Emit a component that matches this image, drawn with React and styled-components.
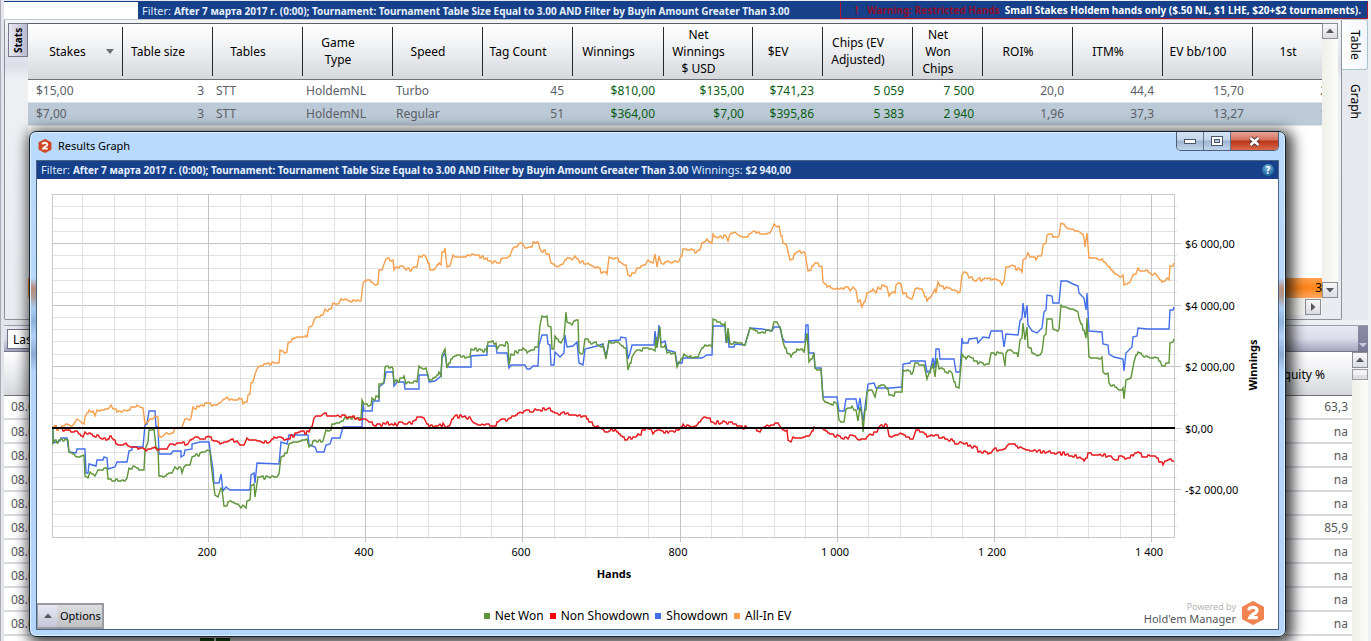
import React from 'react';
import styled, { createGlobalStyle, css } from "styled-components";

const GlobalStyle = createGlobalStyle`
* {
box-sizing: border-box;
}
body {
margin: 0;
overflow: hidden;
background: #eceef3;
font-family: "Noto Sans", "Open Sans", sans-serif;
font-size: 12px;
color: #000000;
}
button, select {
font-family: inherit;
color: inherit;
padding: 0;
margin: 0;
}
`

const Page = styled.div`
position: relative;
display: flex;
flex-direction: column;
min-height: 100vh;
padding: 1px 3px 0 4px;
box-shadow: inset 1px 0 0 #a9abb5;
background: linear-gradient(to right, #e4e5ec, #eef0f4);
`

const TopBar = styled.div`
display: flex;
height: 18px;
border-top: 1px solid #16408a;
background-color: #16408a;
color: #dbe9ff;
font-size: 11px;
line-height: 17px;
white-space: nowrap;
`

const TopBlank = styled.div`
flex: none;
width: 134px;
background-color: #ffffff;
`

const FilterText = styled.div`
flex: 1;
padding-left: 4px;
font-size: 11px;
line-height: 17px;
b {
font-size: 10px;
font-weight: 700;
color: #e6f0ff;
}
`

const Warning = styled.div`
display: flex;
align-items: center;
gap: 5px;
padding: 0 6px 0 14px;
border: 1px solid #b3142c;
border-top: 0;
font-weight: 700;
font-size: 10px;
color: #ffffff;
`

const WarningMark = styled.span`
color: #b00c20;
`

const WarningTitle = styled.span`
padding-left: 4px;
color: #8e0f2c;
`

const UpperPanel = styled.section`
display: flex;
height: 301px;
margin-bottom: 5px;
`

const PanelBody = styled.div`
display: flex;
flex: 1;
min-width: 0;
padding: 3px 3px 4px 3px;
border: 1px solid #8f9199;
border-top-color: #c4c6cc;
border-radius: 2px;
background: linear-gradient(#f4f5f8, #dcdfe8 45px, #eef0f4 60px, #e9ebf0);
`

const StatsTab = styled.button`
flex: none;
width: 20px;
height: 34px;
border: 1px solid #77788a;
background: linear-gradient(to left, #e8e8f2, #b9b9d0);
font-size: 10px;
font-weight: 700;
writing-mode: vertical-rl;
transform: rotate(180deg);
line-height: 16px;
`

const GridArea = styled.div`
display: flex;
flex-direction: column;
flex: 1;
min-width: 0;
overflow: hidden;
border-top: 1px solid #5e6068;
background-color: #ffffff;
`

const StatsTable = styled.table`
table-layout: fixed;
width: 1315px;
border-collapse: collapse;
`

const HeadCell = styled.th`
position: relative;
height: 55px;
padding: 0 20px 0 0;
border-bottom: 1px solid #6d6f76;
background: linear-gradient(#ffffff, #f1f2f4 40%, #d5d7db);
font-weight: 400;
line-height: 17px;
white-space: nowrap;
&:first-child {
padding-right: 16px;
}
&:not(:last-child)::after {
content: "";
position: absolute;
top: 3px;
right: 0;
bottom: 3px;
width: 1px;
background-color: #26272b;
}
`

const SortArrow = styled.span`
position: absolute;
right: 9px;
top: 25px;
border: 4px solid transparent;
border-top: 5px solid #6d6f76;
border-bottom: 0;
`

const StatsRow = styled.tr`
height: 23px;
background-color: ${props => props.$selected ? '#bccad7' : '#ffffff'};
border-bottom: 1px solid #dfe3e7;
`

const Cell = styled.td`
padding: ${props => props.$left ? '0 0 0 3px' : '0 9px 0 0'};
text-align: ${props => props.$left ? 'left' : 'right'};
color: ${props => props.$money ? '#075c10' : '#5b6066'};
line-height: 22px;
white-space: nowrap;
&:first-child {
padding-left: 8px;
}
`

const TotalRow = styled.div`
margin-top: auto;
height: 20px;
background: linear-gradient(#ffa04d, #ff8418 50%, #ffa860);
text-align: right;
line-height: 20px;
`

const HorizontalScroll = styled.div`
display: flex;
justify-content: flex-end;
height: 17px;
padding: 1px 1px 0 0;
background-color: #f4f4f0;
`

const VerticalScroll = styled.div`
display: flex;
flex-direction: column;
justify-content: space-between;
width: 16px;
margin-bottom: ${props => props.$bottom || 0}px;
background: linear-gradient(to right, #f0f0ea, #fbfbf8);
`

const ScrollButton = styled.button`
display: flex;
align-items: center;
justify-content: center;
width: 16px;
height: 16px;
border: 1px solid #8d8e94;
background: linear-gradient(#f8f8fa, #dcdde2);
`

const ScrollThumb = styled.div`
height: 11px;
margin-top: 1px;
margin-bottom: auto;
border: 1px solid #9a9ba2;
background: linear-gradient(#f3f3f5 50%, #dcdde1 50%);
`

const SideTabs = styled.nav`
display: flex;
flex-direction: column;
width: 26px;
background-color: #e6e9ee;
`

const SideTab = styled.button`
height: ${props => props.$active ? 51 : 62}px;
width: 26px;
border: 1px solid ${props => props.$active ? '#a9c3cf' : 'transparent'};
border-left: 0;
border-radius: 0 3px 3px 0;
background: ${props => props.$active ? 'linear-gradient(to right, #ffffff, #f1f5fb)' : 'transparent'};
writing-mode: vertical-rl;
font-size: 12px;
line-height: 24px;
`

const LowerBar = styled.div`
display: flex;
align-items: center;
justify-content: space-between;
height: 27px;
padding-left: 3px;
border-top: 1px solid #9b9bac;
border-bottom: 1px solid #77778b;
background: linear-gradient(#e9e9f3, #dcdcea 50%, #a3a3bf);
`

const RangeSelect = styled.select`
width: 140px;
height: 20px;
border: 1px solid #6e6f80;
padding-left: 1px;
background-color: #ffffff;
font-size: 12px;
`

const BarGrip = styled.div`
display: flex;
align-items: flex-end;
justify-content: center;
align-self: stretch;
width: 10px;
padding-bottom: 2px;
background: linear-gradient(#8b8ba6, #7a7a97);
`

const LowerPanel = styled.section`
display: flex;
flex: 1;
min-height: 0;
background-color: #ffffff;
`

const HandsTable = styled.table`
flex: 1;
display: table;
align-self: flex-start;
border-collapse: collapse;
th {
height: 43px;
padding: 3px 27px 0 0;
border-bottom: 1px solid #6d6f76;
background: linear-gradient(#ffffff, #f0f1f3 40%, #d5d7db);
font-weight: 400;
text-align: right;
}
td {
height: 24px;
padding: 0 4px 0 7px;
border-bottom: 2px solid #d9dadd;
color: #55585d;
}
td:last-child {
text-align: right;
}
`

const Suits = styled.div`
position: absolute;
left: 200px;
bottom: 0;
display: flex;
gap: 2px;
height: 3px;
span {
width: 14px;
background-color: #1c5a12;
border-top: 1px solid #0d2a08;
}
`

const GraphWindow = styled.div`
position: absolute;
top: 131px;
left: 29px;
right: 85px;
padding: 0 6px 6px 6px;
border: 1px solid #14202e;
border-radius: 7px;
background: linear-gradient(#b9dafc 0, #b7d8fd 146px, #b98f7c 156px, #b0998f 164px, #a9cbf2 176px, #8fb2dc 190px, #b0d2f8 204px, #8cabd2 222px, #b4d6fb 240px, #b4d6fb);
box-shadow: inset 0 0 0 1px #dff0ff, 3px 3px 14px 4px rgba(0, 0, 0, 0.75);
`

const TitleBar = styled.header`
display: flex;
align-items: flex-start;
height: 28px;
`

const TitleText = styled.h1`
flex: 1;
margin: 0;
padding: 5px 0 0 6px;
font-size: 11px;
line-height: 18px;
font-weight: 400;
`

const TitleIcon = styled.div`
padding: 7px 0 0 2px;
height: 22px;
`

const WindowButtons = styled.div`
display: flex;
height: 19px;
overflow: hidden;
border: 1px solid #4d5f78;
border-top: 0;
border-radius: 0 0 5px 5px;
`

const WindowButton = styled.button`
display: flex;
align-items: center;
justify-content: center;
width: ${props => props.$close ? 47 : 27}px;
border: 0;
border-right: 1px solid #5f7490;
background: linear-gradient(#d6e5f5, #c2d4e8 45%, #9fb5cf 50%, #c0d6ee);
${props => props.$close && css`
border-right: 0;
background: linear-gradient(#e8a598, #d2705c 45%, #bb3317 50%, #d9694a);
`}
`

const WindowContent = styled.div`
border: 1px solid #4a6583;
background-color: #ffffff;
`

const WindowFilter = styled.div`
display: flex;
align-items: center;
justify-content: space-between;
height: 18px;
padding-right: 4px;
background-color: #16408a;
color: #dbe9ff;
white-space: nowrap;
`

const HelpButton = styled.button`
width: 12px;
height: 12px;
border: 0;
border-radius: 50%;
background: radial-gradient(circle at 50% 30%, #7fb8dd, #1d689f 70%);
color: #ffffff;
font-size: 10px;
font-weight: 700;
line-height: 12px;
`

const Chart = styled.svg`
display: block;
width: 100%;
font-size: 11px;
`

const Footer = styled.footer`
display: grid;
grid-template-columns: 1fr auto 1fr;
align-items: end;
height: 26px;
`

const OptionsButton = styled.button`
display: flex;
justify-self: start;
height: 26px;
border: 2px solid #9a9ba0;
border-left-width: 1px;
background: linear-gradient(#dcdddf, #bfc1c5);
font-size: 11px;
line-height: 22px;
`

const OptionsArrow = styled.span`
display: flex;
align-items: center;
justify-content: center;
width: 19px;
height: 22px;
margin-right: 3px;
background: linear-gradient(#e8e8f4, #c6c6d8);
`

const OptionsLabel = styled.span`
padding-right: 1px;
`

const Legend = styled.ul`
display: flex;
gap: 6px;
margin: 0;
padding: 0 40px 4px 0;
list-style: none;
`

const LegendItem = styled.li`
display: flex;
align-items: center;
gap: 5px;
font-size: 12px;
line-height: 18px;
&::before {
content: "";
width: 6px;
height: 6px;
background-color: ${props => props.color};
}
`

const Brand = styled.div`
display: flex;
justify-self: end;
align-self: start;
align-items: center;
gap: 5px;
height: 20px;
padding-right: 13px;
text-align: right;
`

const BrandText = styled.div`
font-size: 11px;
line-height: 13px;
color: #54565a;
small {
display: block;
font-size: 9px;
line-height: 11px;
color: #b5b5b5;
}
`

const columns = [
  { label: ['Stakes'], width: 95, left: true, sorted: true },
  { label: ['Table size'], width: 90 },
  { label: ['Tables'], width: 90, left: true },
  { label: ['Game', 'Type'], width: 90, left: true },
  { label: ['Speed'], width: 90, left: true },
  { label: ['Tag Count'], width: 90 },
  { label: ['Winnings'], width: 91, money: true },
  { label: ['Net', 'Winnings', '$ USD'], width: 89, money: true },
  { label: ['$EV'], width: 70, money: true },
  { label: ['Chips (EV', 'Adjusted)'], width: 90, money: true },
  { label: ['Net', 'Won', 'Chips'], width: 70, money: true },
  { label: ['ROI%'], width: 90 },
  { label: ['ITM%'], width: 90 },
  { label: ['EV bb/100'], width: 90 },
  { label: ['1st'], width: 90 },
];

const stats = [
  ['$15,00', '3', 'STT', 'HoldemNL', 'Turbo', '45', '$810,00', '$135,00', '$741,23', '5 059', '7 500', '20,0', '44,4', '15,70', '24'],
  ['$7,00', '3', 'STT', 'HoldemNL', 'Regular', '51', '$364,00', '$7,00', '$395,86', '5 383', '2 940', '1,96', '37,3', '13,27', '15'],
];

const equity = ['63,3', 'na', 'na', 'na', 'na', '85,9', 'na', 'na', 'na', 'na'];

const filterLabel = 'After 7 марта 2017 г. (0:00); Tournament: Tournament Table Size Equal to 3.00 AND Filter by Buyin Amount Greater Than 3.00';

const series = [
  { name: 'Net Won', color: '#5f953a', noise: 2, points: '53,428 53,443 65,439 68,440 69,452 75,456 84,455 85,476 88,478 90,472 95,476 98,470 107,468 108,479 118,481 127,478 129,468 135,467 144,470 145,450 148,442 149,430 154,429 156,447 158,449 159,476 172,473 175,467 181,468 182,473 184,467 190,465 192,457 200,453 207,450 210,451 211,463 213,480 215,495 218,497 221,488 222,490 224,506 228,502 238,504 241,508 243,505 246,508 247,501 250,500 251,486 254,484 255,497 258,477 270,478 279,474 281,457 287,453 289,444 298,442 307,439 309,447 315,440 323,441 326,430 331,430 332,424 340,422 345,417 361,419 362,400 364,404 371,405 372,398 379,398 379,384 384,382 385,367 393,369 394,383 404,376 406,384 417,382 419,366 426,368 429,380 439,372 441,376 442,355 445,349 447,368 453,357 470,357 471,349 487,351 488,342 496,343 497,349 500,345 508,344 509,365 511,354 523,348 527,353 538,347 540,325 542,316 547,316 548,326 551,327 552,349 554,349 555,336 561,343 564,337 566,312 567,322 572,325 578,320 579,352 583,353 585,339 593,343 603,345 606,359 609,341 620,344 626,348 628,370 632,357 635,352 643,348 652,349 655,351 656,337 657,348 660,327 661,347 665,345 667,353 675,353 677,367 684,354 695,357 700,352 705,345 712,347 713,319 717,322 725,323 726,338 727,343 728,328 730,344 737,343 745,345 747,338 750,328 760,333 772,330 774,322 778,324 781,330 783,342 787,353 791,357 797,349 804,352 807,333 809,362 814,353 815,368 821,369 823,399 828,403 837,404 839,420 844,422 846,409 852,406 856,410 858,421 860,407 862,415 863,432 867,392 872,390 875,397 877,388 885,386 889,395 902,392 903,370 913,372 915,363 924,365 927,379 933,363 935,377 937,358 939,369 952,373 956,387 959,388 962,354 966,359 970,357 978,364 989,364 991,353 1003,354 1005,366 1006,353 1012,351 1018,357 1020,340 1022,338 1023,323 1025,340 1027,327 1028,347 1037,356 1042,352 1044,336 1046,334 1047,319 1052,319 1053,329 1059,329 1061,305 1070,309 1078,312 1079,318 1086,338 1087,318 1089,357 1102,357 1103,372 1108,373 1109,383 1117,388 1123,388 1124,399 1126,380 1131,378 1134,362 1138,352 1142,355 1155,357 1162,366 1169,363 1170,343 1173,342 1174,339' },
  { name: 'Non Showdown', color: '#e8161b', noise: 2, points: '53,428 65,430 77,431 83,437 85,432 100,438 112,438 118,445 126,443 132,447 140,448 146,451 155,447 160,449 168,447 177,443 188,444 195,437 200,439 208,436 212,440 220,444 230,440 237,441 240,445 244,445 247,438 257,441 270,442 274,437 287,439 297,433 309,432 314,418 323,414 338,415 347,418 362,419 367,420 373,425 395,423 397,426 402,422 407,424 419,417 425,420 429,427 440,424 442,427 443,423 446,428 450,425 454,417 465,416 472,421 482,424 493,426 500,420 508,419 520,412 535,409 547,409 557,413 583,416 593,425 600,428 605,432 615,429 627,440 638,434 648,429 653,434 660,430 668,433 679,430 683,424 693,427 697,425 702,419 707,418 713,422 733,424 747,428 760,432 767,425 778,423 781,428 787,430 788,440 791,442 793,437 802,438 810,435 814,427 822,428 833,434 848,439 852,435 857,439 867,437 870,434 877,432 879,427 887,425 889,436 900,433 913,439 916,430 923,432 927,437 935,435 947,439 958,444 970,445 980,451 988,454 993,450 1002,450 1007,446 1012,444 1022,448 1037,452 1057,453 1080,457 1084,461 1088,453 1100,454 1113,459 1133,456 1138,452 1142,457 1155,456 1159,462 1163,465 1168,460 1174,461' },
  { name: 'Showdown', color: '#426ee8', noise: 0, points: '53,428 53,443 60,441 61,438 67,438 69,452 76,453 77,449 85,449 86,473 88,473 89,464 96,466 97,460 103,460 104,457 107,458 108,469 115,467 117,462 127,462 129,451 132,450 132,447 143,447 145,425 147,424 149,411 155,411 156,426 158,427 159,454 171,454 173,451 181,451 181,457 184,455 185,450 192,449 192,444 200,442 209,442 211,457 213,469 214,483 219,483 221,474 223,491 226,487 230,490 250,490 251,475 254,473 255,483 257,463 279,464 281,442 287,444 289,435 308,435 309,445 315,447 317,452 324,452 326,445 330,444 332,438 340,438 343,427 362,427 363,403 364,411 372,411 373,401 379,401 379,387 384,383 386,372 393,372 394,386 397,382 404,382 405,389 419,389 419,375 428,375 429,382 435,381 441,376 442,358 445,353 447,367 471,367 471,356 487,355 487,346 496,346 497,353 507,353 509,368 511,365 525,365 527,369 530,369 533,366 538,366 539,345 542,335 547,335 548,344 550,345 551,365 554,365 555,352 560,357 564,353 565,335 567,347 573,346 577,342 579,363 583,365 585,349 597,346 603,344 606,357 609,341 620,340 621,337 626,338 628,359 630,353 632,345 654,345 655,331 657,347 659,325 661,343 665,341 667,350 675,352 677,363 682,363 683,358 702,358 707,355 712,355 713,326 725,326 726,343 728,330 729,347 734,347 735,344 745,345 747,338 750,328 762,329 772,331 774,327 780,327 782,337 785,342 805,342 806,325 808,325 809,353 814,353 815,368 821,368 823,397 837,397 839,411 844,411 846,399 856,399 858,410 860,398 863,422 867,392 868,384 874,383 876,388 890,388 902,387 903,364 910,363 911,361 925,361 927,372 930,371 933,358 935,368 936,349 939,349 940,359 954,359 956,372 960,372 962,338 963,343 968,343 969,339 977,338 978,343 983,337 989,338 991,331 1002,331 1004,347 1006,334 1018,335 1020,321 1022,318 1023,303 1025,318 1027,305 1028,325 1032,331 1037,333 1042,328 1044,312 1046,310 1047,295 1052,296 1053,303 1059,303 1061,281 1067,281 1073,284 1078,286 1079,293 1084,298 1086,310 1087,293 1089,331 1102,332 1103,344 1108,345 1109,354 1114,357 1123,359 1124,371 1126,353 1132,347 1133,337 1137,336 1138,328 1147,329 1169,329 1170,310 1173,310 1174,307' },
  { name: 'All-In EV', color: '#f5a04d', noise: 2, points: '53,428 60,428 64,426 69,425 74,424 77,419 80,421 84,424 85,417 89,410 93,411 95,416 97,410 105,409 109,408 111,405 117,412 124,410 127,411 133,407 137,405 140,407 143,408 145,424 150,419 155,416 158,417 159,436 164,435 170,434 175,428 182,427 185,419 191,418 193,407 199,407 207,403 212,406 217,405 222,401 227,397 233,400 239,398 243,404 247,402 248,395 250,394 251,383 253,382 255,374 258,367 266,364 279,363 280,350 287,352 288,343 295,338 307,337 309,327 312,326 315,318 323,315 325,309 331,309 333,303 339,303 341,299 361,301 363,283 367,280 373,283 378,284 379,270 383,267 386,259 393,260 394,270 403,266 406,270 412,269 417,267 419,256 426,257 430,270 435,269 439,263 441,265 442,252 444,252 445,248 447,267 450,266 453,255 470,256 487,258 488,261 497,263 501,259 507,258 512,250 518,245 523,244 527,248 535,243 538,242 540,249 549,254 551,263 558,267 563,264 567,258 572,260 575,256 580,263 588,263 595,268 603,272 607,274 609,257 615,258 622,263 626,265 628,275 632,273 637,268 645,265 648,260 653,263 655,254 657,267 659,256 661,263 679,261 683,249 697,251 702,243 707,239 712,243 713,234 718,238 726,236 728,241 730,234 735,232 738,235 745,237 752,232 762,234 770,233 773,227 774,224 777,227 779,226 783,243 787,247 790,260 797,252 805,253 808,271 815,263 822,267 823,282 827,287 837,288 845,287 850,291 853,287 856,290 858,302 860,300 862,307 867,293 873,289 876,293 878,287 887,287 889,296 895,293 896,285 901,284 903,294 909,298 913,296 915,289 923,291 927,301 932,295 935,289 936,293 938,282 940,286 950,288 958,293 960,292 962,275 967,273 969,278 977,280 987,279 1000,281 1002,285 1004,281 1006,267 1012,265 1022,272 1023,260 1026,258 1028,253 1030,257 1036,260 1042,254 1043,245 1046,243 1047,235 1059,236 1061,223 1065,226 1073,229 1080,232 1084,238 1085,247 1087,233 1089,258 1102,259 1107,265 1118,275 1123,275 1124,285 1130,282 1133,275 1138,268 1142,271 1150,273 1155,273 1158,277 1162,282 1167,278 1169,280 1170,266 1174,263' },
];

// draw order differs from the legend order
const drawOrder = [2, 0, 1, 3];

// small hand-to-hand swings between the main turning points
function roughen(points, noise) {
  const list = points.split(' ').map(p => p.split(',').map(Number));
  const out = [list[0]];
  let seed = 7;
  for (let i = 1; i < list.length; i++) {
    const [x1, y1] = list[i - 1];
    const [x2, y2] = list[i];
    if (noise) {
      for (let x = x1 + 2; x < x2 - 1; x += 2) {
        seed = (seed * 16807) % 2147483647;
        const swing = (seed / 2147483647 - 0.5) * 2 * noise;
        const y = Math.round(y1 + (y2 - y1) * (x - x1) / (x2 - x1) + swing);
        out.push([x, y], [x + 1, y]);
      }
    }
    out.push([x2, y2]);
  }
  return out.map(p => p.join(',')).join(' ');
}

const yTicks = [
  [243, '$6 000,00'], [305, '$4 000,00'], [366, '$2 000,00'], [428, '$0,00'], [489, '-$2 000,00'],
];
const xTicks = ['200', '400', '600', '800', '1 000', '1 200', '1 400'];

function Arrow({ dir = 'up', color = '#55575d' }) {
  const turn = { up: 0, right: 90, down: 180 }[dir];
  return (
    <svg width="8" height="8" viewBox="0 0 8 8">
      <path d="M0 6 L4 1.5 L8 6 Z" fill={color} transform={`rotate(${turn} 4 4)`} />
    </svg>
  )
}

function Logo({ size, color }) {
  return (
    <svg width={size} height={size} viewBox="0 0 24 24">
      <path d="M12 0.5 L22.5 6 V18 L12 23.5 L1.5 18 V6 Z" fill={color} stroke={color} strokeLinejoin="round" />
      <path d="M7.8 9.2 C8.2 5.6 16 5.4 16 9.4 C16 12.2 10 13.4 8.8 16.6 H16.8" fill="none" stroke="#ffffff" strokeWidth="3.2" />
    </svg>
  )
}

function ResultsChart() {
  const rows = [];
  for (let i = -3; i <= 24; i++) {
    const y = Math.round(489 - (i * 61.5) / 5) + 0.5;
    if (y > 195 && y < 537) rows.push({ y, major: i % 5 === 0 });
  }
  const cols = [];
  for (let i = 1; i < 36; i++) {
    cols.push({ x: Math.round(51 + i * 31.43) + 0.5, major: i % 5 === 0 });
  }
  return (
    <Chart viewBox="37 179 1241 424" role="img" aria-label="Winnings by hands">
      {rows.map(r => (
        <line key={r.y} x1="52" x2={r.major ? 1181 : 1177} y1={r.y} y2={r.y} stroke={r.major ? '#c4c4c4' : '#e2e2e2'} />
      ))}
      {cols.map(c => (
        <line key={c.x} y1="194" y2={c.major ? 542 : 539} x1={c.x} x2={c.x} stroke={c.major ? '#c4c4c4' : '#e2e2e2'} />
      ))}
      <rect x="52.5" y="194.5" width="1122" height="343" fill="none" stroke="#c8c8c8" />
      {drawOrder.map(i => (
        <polyline
          key={series[i].name}
          points={roughen(series[i].points, series[i].noise)}
          fill="none"
          stroke={series[i].color}
          strokeWidth="1.4"
        />
      ))}
      <line x1="52" x2="1175" y1="428" y2="428" stroke="#000000" strokeWidth="2" />
      {yTicks.map(([y, text]) => <text key={text} x="1185" y={y + 5}>{text}</text>)}
      {xTicks.map((text, i) => <text key={text} x={207 + i * 157} y="556" textAnchor="middle">{text}</text>)}
      <text x="614" y="578" textAnchor="middle" fontWeight="700">Hands</text>
      <text textAnchor="middle" fontWeight="700" transform="translate(1257 365) rotate(-90)">Winnings</text>
    </Chart>
  )
}

function ResultsWindow() {
  return (
    <GraphWindow>
      <TitleBar>
        <TitleIcon><Logo size={14} color="#cf4520" /></TitleIcon>
        <TitleText>Results Graph</TitleText>
        <WindowButtons>
          <WindowButton aria-label="Minimize">
            <svg width="14" height="6"><rect x="1.5" y="1.5" width="11" height="4" fill="#ffffff" stroke="#4a5568" /></svg>
          </WindowButton>
          <WindowButton aria-label="Maximize">
            <svg width="12" height="11">
              <rect x="0.5" y="0.5" width="11" height="9" fill="#ffffff" stroke="#4a5568" />
              <rect x="3.5" y="3.5" width="5" height="3" fill="#b4c8de" stroke="#4a5568" />
            </svg>
          </WindowButton>
          <WindowButton $close aria-label="Close">
            <svg width="13" height="11" viewBox="0 0 13 11">
              <path d="M2.5 2 L10.5 9 M10.5 2 L2.5 9" stroke="#4e3438" strokeWidth="4.4" />
              <path d="M2.5 2 L10.5 9 M10.5 2 L2.5 9" stroke="#ffffff" strokeWidth="2.6" />
            </svg>
          </WindowButton>
        </WindowButtons>
      </TitleBar>
      <WindowContent>
        <WindowFilter>
          <FilterText>Filter: <b>{filterLabel}</b> Winnings: <b>$2 940,00</b></FilterText>
          <HelpButton aria-label="Help">?</HelpButton>
        </WindowFilter>
        <ResultsChart />
        <Footer>
          <OptionsButton>
            <OptionsArrow><Arrow /></OptionsArrow>
            <OptionsLabel>Options</OptionsLabel>
          </OptionsButton>
          <Legend>
            {series.map(s => (
              <LegendItem key={s.name} color={s.name === 'Non Showdown' ? '#fb0007' : s.color}>{s.name}</LegendItem>
            ))}
          </Legend>
          <Brand>
            <BrandText><small>Powered by</small>Hold'em Manager</BrandText>
            <Logo size={24} color="#f0834f" />
          </Brand>
        </Footer>
      </WindowContent>
    </GraphWindow>
  )
}

function App() {
  return (
    <Page>
      <GlobalStyle />
      <TopBar>
        <TopBlank />
        <FilterText>Filter: <b>{filterLabel}</b></FilterText>
        <Warning>
          <WarningMark>!</WarningMark>
          <WarningTitle>Warning: Restricted Hands</WarningTitle>
          Small Stakes Holdem hands only ($.50 NL, $1 LHE, $20+$2 tournaments).
        </Warning>
      </TopBar>
      <UpperPanel>
        <PanelBody>
          <StatsTab>Stats</StatsTab>
          <GridArea>
            <StatsTable>
              <colgroup>
                {columns.map(c => <col key={c.label.join(' ')} style={{width: c.width}} />)}
              </colgroup>
              <thead>
                <tr>
                  {columns.map(c => (
                    <HeadCell key={c.label.join(' ')}>
                      {c.label.map((line, i) => <React.Fragment key={line}>{i > 0 && <br />}{line}</React.Fragment>)}
                      {c.sorted && <SortArrow />}
                    </HeadCell>
                  ))}
                </tr>
              </thead>
              <tbody>
                {stats.map((row, r) => (
                  <StatsRow key={row[0]} $selected={r === 1}>
                    {row.map((value, i) => (
                      <Cell key={columns[i].label.join(' ')} $left={columns[i].left} $money={columns[i].money}>{value}</Cell>
                    ))}
                  </StatsRow>
                ))}
              </tbody>
            </StatsTable>
            <TotalRow>3</TotalRow>
            <HorizontalScroll>
              <ScrollButton aria-label="Scroll right"><Arrow dir="right" /></ScrollButton>
            </HorizontalScroll>
          </GridArea>
          <VerticalScroll $bottom={17}>
            <ScrollButton aria-label="Scroll up"><Arrow /></ScrollButton>
            <ScrollButton aria-label="Scroll down"><Arrow dir="down" /></ScrollButton>
          </VerticalScroll>
        </PanelBody>
        <SideTabs>
          <SideTab $active>Table</SideTab>
          <SideTab>Graph</SideTab>
        </SideTabs>
      </UpperPanel>
      <LowerBar>
        <RangeSelect aria-label="Range" defaultValue="Last session">
          <option>Last session</option>
        </RangeSelect>
        <BarGrip><Arrow dir="down" color="#c9c9dc" /></BarGrip>
      </LowerBar>
      <LowerPanel>
        <HandsTable>
          <thead>
            <tr><th /><th>Equity %</th></tr>
          </thead>
          <tbody>
            {equity.map((value, i) => (
              <tr key={i}><td>08.03.2017</td><td>{value}</td></tr>
            ))}
          </tbody>
        </HandsTable>
        <VerticalScroll>
          <ScrollButton aria-label="Scroll up"><Arrow /></ScrollButton>
          <ScrollThumb />
        </VerticalScroll>
      </LowerPanel>
      <Suits><span /><span /></Suits>
      <ResultsWindow />
    </Page>
  )
}

export default App;
